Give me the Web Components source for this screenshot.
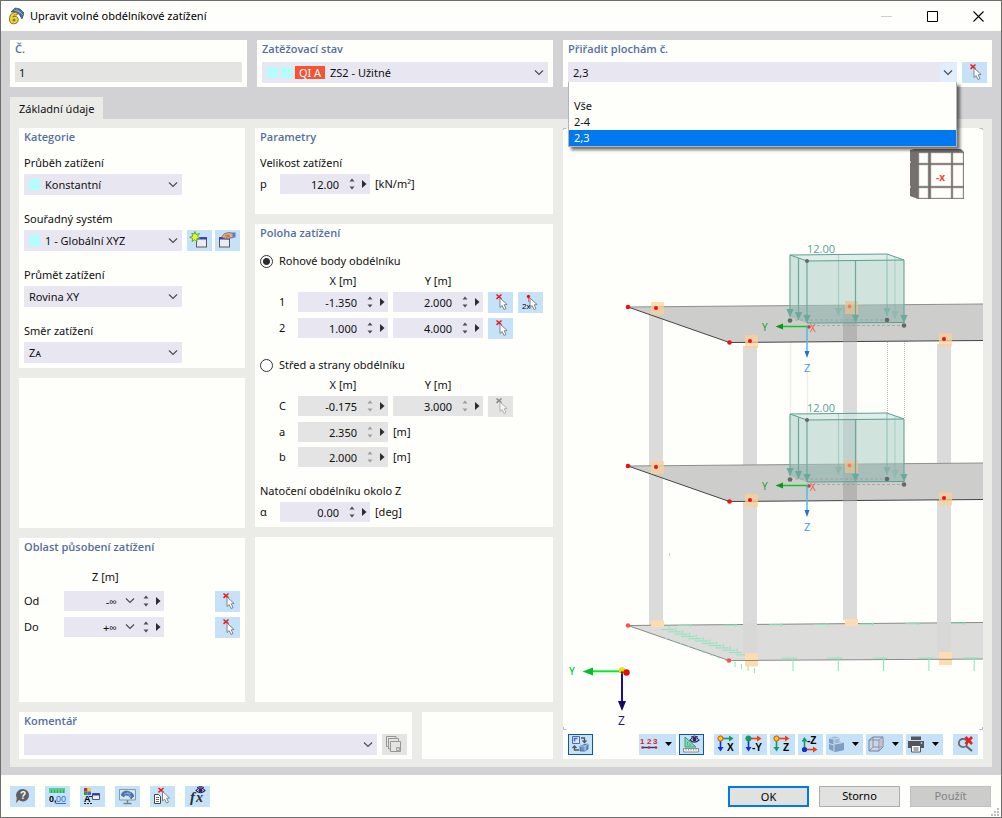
<!DOCTYPE html>
<html lang="cs">
<head>
<meta charset="utf-8">
<title>Upravit volné obdélníkové zatížení</title>
<style>
  body { margin: 0; font: 11px/18px "Noto Sans", "Open Sans", sans-serif; color: #101010; background: #fefefb; }
</style>
</head>
<body>
<load-dialog></load-dialog>

<script>
const BASE = `
  *, *::before, *::after { box-sizing: border-box; }
  button, input, select { font: inherit; color: inherit; margin: 0; }
  button { padding: 0; border: 0; background: none; }
  svg { display: block; }
`;

function define(name, render) {
  customElements.define(name, class extends HTMLElement {
    connectedCallback() {
      if (this.shadowRoot) return;
      const t = document.createElement('template');
      t.innerHTML = render(this);
      this.attachShadow({ mode: 'open' }).append(t.content.cloneNode(true));
    }
  });
}

const cursor = (x, y, c = '#77777f', f = '#fff') =>
  `<path d="M${x} ${y}v9.5l2.2-1.9 1.8 3.9 2-.9-1.8-3.8 2.9-.3z" fill="${f}" stroke="${c}" stroke-width=".9"/>`;
const cross = (x, y, c = '#f01818') =>
  `<path d="M${x} ${y}l5 4.4M${x + 5} ${y}l-5 4.4" stroke="${c}" stroke-width="1.5" fill="none"/>`;
const eye = (x, y) =>
  `<path d="M${x - 4.5} ${y}q4.5-5.500 9 0q-4.500 4.500-9 0z" fill="#fff" stroke="#2b2163" stroke-width="1.100"/><circle cx="${x}" cy="${y - .3}" r="2" fill="#2b2163"/><path d="M${x - 3.5} ${y - 3}q3.500-2 7 0" stroke="#2b2163" fill="none"/>`;
const axes = (h, v, dot, label, up) => up
  ? `<path d="M6.500 14V5" stroke="${v}" stroke-width="1.600"/><path d="M3.500 7.500l3-4.500 3 4.500z" fill="${v}"/><path d="M7 15.500h9" stroke="${h}" stroke-width="1.600"/><path d="M15 12.500l4.500 3-4.500 3z" fill="${h}"/><circle cx="6.500" cy="15.500" r="2.600" fill="${dot}"/><text x="9" y="10" font-size="10" font-weight="700">${label}</text>`
  : `<path d="M6.500 5v9" stroke="${v}" stroke-width="1.600"/><path d="M3.500 13l3 4.500 3-4.500z" fill="${v}"/><path d="M7 4.500h9" stroke="${h}" stroke-width="1.600"/><path d="M15 1.500l4.500 3-4.500 3z" fill="${h}"/><circle cx="6.500" cy="4.500" r="2.600" fill="${dot}" stroke="${dot === '#ffd000' ? '#e04010' : dot}"/><text x="${label.length > 1 ? 10 : 13}" y="17" font-size="10" font-weight="700">${label}</text>`;
const newWindow = x =>
  `<rect x="${x + .5}" y="7.500" width="10" height="9.500" fill="#ecebf0" stroke="#5e5a50"/><path d="M${x} 8.500h11" stroke="#3b36d8" stroke-width="2"/>`;

const ICONS = {
  pick: cross(8.5, 2.5) + cursor(12, 6),
  pickOff: cross(8.5, 2.5, '#888') + cursor(12, 6, '#aaa', '#f6f6f6'),
  pickTwo: `<path d="M10.500 5v5" stroke="#e07070"/>` + cursor(12, 6) + `<circle cx="10.500" cy="4.500" r="1.700" fill="#f01010"/><text x="4" y="17" font-size="8">2x</text>`,
  create: newWindow(9) + `<path d="M8 1.500l1 3 3.500-1-2 2.800 2.500 2-3.200.4.200 3.300-2.300-2.400-2.700 2 .8-3.100-3-1.300 3-1-1-3 2.300 1z" fill="#e8ff20" stroke="#3d9a35" stroke-width=".8"/>`,
  edit: newWindow(4) + `<path d="M7 6.500l2.500-3 5-1 4.500 1-.5 4-4.500.7-1 1.800-1-1.700-2 1.200-.5-1.700-1.800.4z" fill="#dcab84" stroke="#80604a" stroke-width=".8"/><path d="M10 6l4-1M11 7.500l4-1.500" stroke="#80604a" stroke-width=".7"/><path d="M17.500 2.500h3v5l-3-.5z" fill="#4f83d0"/>`,
  copy: `<g fill="#e4e4e2" stroke="#969693"><path d="M4.500 2.500h9.500v10H4.500z"/><path d="M6.500 4.500h10v10.500h-10z"/><path d="M8.500 7.500h10v10h-10z"/><path d="M14.500 13.500h3v3h-3zM15 15.500l2.500-2.500" stroke-width=".8"/></g>`,
  help: `<path d="M13 3a6.200 6.200 0 1 1-4 11l-3 3 .8-5A6.200 6.200 0 0 1 13 3z" fill="#62605e"/><text x="10" y="13" font-size="10" font-weight="700" fill="#fff">?</text>`,
  units: `<path d="M4 2h16v5H4z" fill="#55cf8b"/><path d="M6.500 4v3M9.500 4v3M12.500 4v3M15.500 4v3M18.500 4v3" stroke="#2c9a60" stroke-width=".8"/><text x="4" y="16" font-size="9" font-weight="700">0,</text><text x="11" y="16" font-size="9" fill="#3d66d8">00</text><path d="M11 17.500h10" stroke="#3d66d8"/>`,
  display: `<path d="M4 2h3.500v3.500H4z" fill="#e02020"/><path d="M7.500 2H11v3.500H7.500z" fill="#e8d820"/><path d="M4 5.500h3.500V9H4z" fill="#20a040"/><path d="M7.500 5.500H11V9H7.500z" fill="#6050f0"/><text x="4" y="16" font-size="9" font-weight="700">A</text><path d="M4 17.500h8" stroke="#222" stroke-dasharray="2 1"/><path d="M9 10.500h4" stroke="#222"/><path d="M12.500 7.500h7v6h-7z" fill="#f0eff8" stroke="#555"/><path d="M12.500 8.500h7" stroke="#3b36b8" stroke-width="2"/>`,
  monitor: `<path d="M4.500 3.500h16v10.500h-16z" fill="#d2e6f5" stroke="#8c989e"/><path d="M6 9q3-7 11-2l2 3-3 3q-1-4-5-4-2 0-2 2z" fill="#4777ae" stroke="#305a8c" stroke-width=".6"/><path d="M9 8l7-1M12 6l4 5" stroke="#9fc2e6" stroke-width=".7"/><path d="M12.500 14v3M8.500 17.500h8" stroke="#7c8488" stroke-width="1.500"/>`,
  listPick: `<path d="M4.500 8.500h4l2 2v7h-6z" fill="#fff" stroke="#444"/><path d="M6 11.500h3M6 13.500h3M6 15.500h3" stroke="#444" stroke-width=".8"/>` + cross(8.5, 2) + cursor(12.5, 5.5),
  formula: `<g font-family="'Liberation Serif', serif" font-style="italic" font-weight="700" fill="#26323c"><text x="5" y="16" font-size="15">f</text><text x="11" y="16" font-size="14">x</text></g>` + eye(15.5, 4.5),
  views: `<path d="M4.500 2.500h7v7h-7z" fill="#dce8fa" stroke="#4a68c0"/><path d="M6.500 7.500v-3h3" stroke="#4a68c0" stroke-width="1.500" fill="none"/><path d="M13 4h3.500v4M14.500 6.500l2 2 2-2" stroke="#555" fill="none" stroke-width="1.300"/><path d="M11 16H6.500v-3.500M4.500 14l2-2 2 2" stroke="#555" fill="none" stroke-width="1.300"/><path d="M12 12l5-1.500 3-.5v5l-3 2h-5z" fill="#6a96c4" stroke="#3c638e" stroke-width=".8"/><path d="M12 12h5v5M17 12l3-2" stroke="#c9def2" stroke-width=".8" fill="none"/>`,
  numbers: `<g font-size="8" font-weight="700" fill="#e02020"><text x="1" y="10">1</text><text x="8" y="10">2</text><text x="14" y="10">3</text></g><path d="M3.500 13.500h14" stroke="#2b2a80" stroke-width="1.300"/><g fill="#e02020"><circle cx="3.500" cy="13.500" r="1.300"/><circle cx="10" cy="13.500" r="1.300"/><circle cx="17" cy="13.500" r="1.300"/></g>`,
  measure: `<path d="M6 3v10h11z" fill="#7fe0aa" stroke="#3e9a70"/><path d="M8.500 8v3h3.500z" fill="#c5e2f8" stroke="#3e9a70" stroke-width=".7"/><path d="M4.500 14.500h15v3.500h-15z" fill="#f4f4f0" stroke="#777" stroke-width=".8"/><path d="M7 15v1.500M9.500 15v1.500M12 15v1.500M14.500 15v1.500M17 15v1.500" stroke="#777" stroke-width=".7"/>` + eye(15.5, 6),
  axisX: axes('#109a68', '#1030d0', '#ffd000', 'X'),
  axisY: axes('#f04010', '#1030d0', '#109a68', '-Y'),
  axisZ: axes('#f04010', '#109a68', '#ffd000', 'Z'),
  axisUp: axes('#f04010', '#109a68', '#1030d0', '-Z', true),
  solid: `<path d="M3 4l6-1.500 5 1v4l4 1v7.500l-9 2-6-3z" fill="#9dbbd6"/><path d="M3 4l5 1.200v5l10-1.700V16l-9 2-6-3z" fill="#7e9fc2"/><path d="M3 4l5 1.200 6-1.700M8 5.200v5l9.500-1.700M3 9.500l5 1.500v6.500M14 4v4" fill="none" stroke="#dceaf6" stroke-width=".8"/>`,
  cube: `<path d="M3 6l4-3h10v10l-4 4H3z" fill="#c8d6e6" stroke="#77809a"/><path d="M3 6h10v11M13 6l4-3M7 3v10h10M7 13l-4 4" fill="none" stroke="#77809a" stroke-width=".8"/><path d="M13 6l4-3v10l-4 4z" fill="#c7a9b8" opacity=".5"/>`,
  print: `<path d="M5 2.500h10V6H5z" fill="#55565a"/><path d="M2 7h16v7H2z" fill="#55565a"/><path d="M5.500 11.500h9v6.500h-9z" fill="#fff" stroke="#55565a"/><path d="M7.500 14h5M7.500 16h5" stroke="#55565a"/><circle cx="15.500" cy="9" r=".8" fill="#fff"/>`,
  noFind: `<circle cx="10" cy="9" r="4.200" fill="none" stroke="#666" stroke-width="1.700"/><path d="M13 12l6 5" stroke="#666" stroke-width="2.200"/><path d="M12.500 3l6.500 7M19 3l-6.500 7" stroke="#ee1c1c" stroke-width="2.600"/>`
};

define('tool-button', el => {
  const split = el.hasAttribute('split'), icon = el.getAttribute('icon');
  return `<style>${BASE}
    :host { display: block; flex: none; width: ${split ? 37 : 25}px; height: 21px; }
    button { display: flex; width: 100%; height: 100%; background: #c5e2f9; }
    button[aria-pressed=true] { box-shadow: inset 0 0 0 1px #0a59a8; }
    button:disabled { background: #e4e4e2; }
    svg { font-family: "Liberation Sans", sans-serif; }
  </style>
  <button type="button" aria-label="${el.getAttribute('label')}" ${el.hasAttribute('disabled') ? 'disabled' : ''} ${el.hasAttribute('pressed') ? 'aria-pressed="true"' : ''}>
    <svg width="${split ? 37 : 25}" height="21" viewBox="0 0 ${split ? 37 : 25} 21" aria-hidden="true">${ICONS[icon]}${split ? '<path d="M26 8h7l-3.500 4z" fill="#000"/>' : ''}</svg>
  </button>`;
});

define('group-panel', el => `<style>${BASE}
  :host { display: block; min-width: 0; padding: 0 5px 4px; background: #fefefb; }
  h2 { margin: 0 0 4px; font: 600 11px/18px "Open Sans", "Noto Sans", sans-serif; color: #54709c; }
  </style>${el.hasAttribute('heading') ? `<h2>${el.getAttribute('heading')}</h2>` : ''}<slot></slot>`);

define('color-swatch', () => `<style>:host { display: block; flex: none; width: 11px; height: 11px; background: #b4fdfd; }</style>`);

define('drop-box', () => `<style>${BASE}
  :host { display: flex; align-items: center; position: relative; min-width: 0; height: 21px; padding-left: 5px; background: #e8e7f1; }
  ::slotted(select), ::slotted(input) { flex: 1; min-width: 0; width: 100%; height: 21px; margin: 0; padding: 0 18px 0 0; border: 0; background: none; appearance: none; font: inherit; line-height: 21px; color: inherit; outline: 0; }
  svg { position: absolute; right: 4px; top: 8px; pointer-events: none; }
  </style><slot name="lead"></slot><slot></slot>
  <svg width="10" height="6" viewBox="0 0 10 6" aria-hidden="true"><path d="M1 .5l4 4 4-4" fill="none" stroke="#4c4c52" stroke-width="1.200"/></svg>
  <slot name="list"></slot>`);

define('spin-box', el => {
  const c = el.hasAttribute('off') ? '#9b9b9b' : '#4c4c52', list = el.hasAttribute('list');
  return `<style>${BASE}
  :host { display: flex; height: 20px; background: ${el.hasAttribute('off') ? '#e4e4e4' : '#e8e7f1'}; }
  ::slotted(input) { flex: 1; min-width: 0; width: 0; height: 20px; padding: 2px ${list ? 3 : 7}px 0 0; border: 0; background: none; font: inherit; color: #101010; text-align: right; outline: 0; }
  button { display: grid; place-items: center; width: 12px; height: 100%; }
  .list { width: 20px; }
  .steps { display: grid; grid-template-rows: 1fr 1fr; padding: 2px 0; }
  .steps button { height: 8px; }
  </style><slot></slot>
  ${list ? `<button type="button" class="list" aria-label="Seznam" tabindex="-1"><svg width="10" height="6" viewBox="0 0 10 6"><path d="M1 .5l4 4 4-4" fill="none" stroke="#4c4c52" stroke-width="1.200"/></svg></button>` : ''}
  <div class="steps">
    <button type="button" tabindex="-1" aria-label="Zvýšit"><svg width="6" height="4" viewBox="0 0 6 4"><path d="M.5 3.500L3 .5l2.500 3z" fill="${c}"/></svg></button>
    <button type="button" tabindex="-1" aria-label="Snížit"><svg width="6" height="4" viewBox="0 0 6 4"><path d="M.5.5L3 3.500 5.500.5z" fill="${c}"/></svg></button>
  </div>
  <button type="button" tabindex="-1" aria-label="Další"><svg width="6" height="8" viewBox="0 0 6 8"><path d="M1 0v8l4.500-4z" fill="#2c2c2c"/></svg></button>`;
});

define('title-bar', () => `<style>${BASE}
  :host { display: flex; flex: none; align-items: center; height: 30px; padding-left: 7px; background: #fefefb; }
  h1 { flex: 1; margin: 0 0 0 6px; font: inherit; color: #000; }
  button { display: grid; place-items: center; width: 46px; height: 30px; }
  </style>
  <svg width="16" height="18" viewBox="0 0 16 18" aria-hidden="true">
    <path d="M3 5l4-4 5 1 4 4-2 6-3-5-4-2z" fill="#4b6d9c" stroke="#2d4668" stroke-width=".7"/><path d="M6 3l6 2 3 3M8 1.500l5 5" stroke="#a9c2e2" stroke-width=".7" fill="none"/>
    <path d="M9.500 5.500C4 4.500 1.500 8 1.500 12c0 3.500 1.500 4.800 4 4.800 3 0 4.700-1.500 4.700-4 0-2.300-1.400-3.500-3.200-3.500-1 0-1.600.3-2.200.8C5.200 8.500 6.500 7.500 9 8z" fill="#f2d534" stroke="#75621b" stroke-width=".9"/><circle cx="6" cy="13" r="1.500" fill="#8a7a34"/>
  </svg>
  <h1>Upravit volné obdélníkové zatížení</h1>
  <button type="button" aria-label="Minimalizovat"><svg width="11" height="11" viewBox="0 0 11 11"><path d="M0 5.500h11" stroke="#cfcfcf"/></svg></button>
  <button type="button" aria-label="Maximalizovat"><svg width="11" height="11" viewBox="0 0 11 11"><path d="M.5.5h10v10H.5z" fill="none" stroke="#000"/></svg></button>
  <button type="button" aria-label="Zavřít"><svg width="11" height="11" viewBox="0 0 11 11"><path d="M.5.5l10 10M10.500.5l-10 10" stroke="#000" stroke-width="1.100"/></svg></button>`);

/* One storey: the slab with its column heads, the load box above it and the local axes. */
function storey(dy) {
  const node = (x, y, c = '#f01010', r = 2.3) => `<circle cx="${x}" cy="${y}" r="${r}" fill="${c}"/>`;
  const arrow = (x, y1, y2, o = 1) => `<g opacity="${o}"><path d="M${x} ${y1}V${y2}" stroke="#68ab9d" stroke-width="1.200"/><path d="M${x - 3.6} ${y2 - 8}h7.200l-3.600 8z" fill="#68ab9d"/></g>`;
  return `<g transform="translate(0 ${dy})">
    <path d="M628 307L983 304V340.500L729.500 342.500z" fill="#cdcdcb"/>
    <path d="M628 307L983 304" stroke="#8f8f8f" fill="none"/>
    <path d="M628 307L729.500 342.500L983 340.500" stroke="#444" fill="none"/>
    <path d="M843 306h14v35.500h-14z" fill="#b4b4b2"/>
    <g fill="#ffd096" opacity=".72"><path d="M651 302h13v13h-13zM745 335h13v13h-13zM939 333.500h13v13h-13z"/></g>
    ${node(628, 307)}${node(656, 308, '#f01010', 2)}${node(729.5, 342.5)}${node(750, 341, '#f01010', 2)}${node(944, 339, '#f01010', 2)}
    <path d="M790 255L887 254L904 260V323H807L790 317z" fill="#a9cbc2" opacity=".54"/>
    <path d="M790 306.500L904 305V323H807L790 317z" fill="#7f9f98" opacity=".28"/>
    <path d="M790 255L887 254L904 260L807 261z" fill="#fff" opacity=".35"/>
    <path d="M845 301h13v13h-13z" fill="#e8c394" opacity=".75"/>${node(849.5, 306.5, '#f08060', 2)}
    <path d="M790 255L887 254L904 260L807 261zM807 323L904 322.500" fill="none" stroke="#58a294"/>
    ${arrow(838.5, 254, 316, .4)}${arrow(887, 254, 316, .55)}${arrow(895, 257, 319, .3)}${arrow(790, 255, 317)}${arrow(798.5, 258, 320)}${arrow(807, 261, 323)}${arrow(855.5, 261, 323)}${arrow(904, 260, 323)}
    <path d="M807 325.500H904M790 320L887 320" stroke="#999" stroke-dasharray="3 2" fill="none" stroke-width=".7"/>
    ${node(807, 261, '#666', 2)}${node(790, 320.5, '#666')}${node(887, 320, '#666')}${node(904, 325.5, '#666')}
    <text x="807" y="253" font-size="11" fill="#58a294">12.00</text>
    <path d="M807 326.500H782" stroke="#08c81c" stroke-width="1.500"/><path d="M783 323.500v6l-7.500-3z" fill="#089818"/>
    <path d="M807 327v25" stroke="#49bdf2" stroke-width="1.500"/><path d="M804.500 351h5l-2.500 7z" fill="#2570c8"/>
    <circle cx="809" cy="327" r="1.800" fill="#c04838"/><text x="810" y="332" font-size="10" fill="#f45a48">X</text>
    <text x="762" y="331" font-size="10" fill="#109a18">Y</text>
    <text x="804" y="372" font-size="11" fill="#3b9bf0">Z</text>
  </g>`;
}
function supports() {
  let top = '', side = '', bottom = '';
  for (let i = 0; i < 7; i++) { const x = 692 + i * 45.5, y = 625.500 - i * .35; top += `M${x - 14} ${y}h14m-1.500-1.500v3`; }
  for (let i = 0; i < 12; i++) { const x = 667 + i * 6.8, y = 626 + i * 2.3; side += `M${x - 6} ${y + 3.5}h13m-5-4v3`; }
  for (let i = 0; i < 5; i++) { const x = 793 + i * 45.3; bottom += `M${x} 657v14m-11-13h15`; }
  for (let i = 0; i < 4; i++) bottom += `M${735 + i * 6.5} ${662 + i * 2}v5`;
  return `<g fill="none" stroke="#86e8b8"><path d="${top}"/><path d="${side}"/><path d="${bottom}"/><path d="M665 638l65 24" stroke-dasharray="2 6"/></g>`;
}

define('model-view', () => {
  let cells = '';
  for (const [y, h] of [[153, 10], [165, 21], [188, 10]])
    for (const [x, w] of [[919, 9], [931, 20], [953, 10]]) cells += `<path d="M${x} ${y}h${w}v${h}h-${w}z"/>`;
  return `<style>${BASE}
  :host { display: flex; flex-direction: column; gap: 4px; min-width: 0; padding-bottom: 4px; background: #fefefb; }
  .scene { flex: 1 1 0px; width: 100%; height: 0; min-height: 400px; }
  .tools { display: flex; flex: none; gap: 3px; padding: 0 5px; }
  .fill { flex: 1; }
  .space { width: 4px; }
  text { font-family: "Open Sans", sans-serif; }
  </style>
  <svg class="scene" viewBox="563 128 420 602" preserveAspectRatio="xMaxYMin meet" role="img" aria-label="Model konstrukce">
    <path d="M563.500 130v-1.500h3M982.500 130v-1.500h-3M563.500 727v2.500h3M982.500 727v2.500h-3" fill="none" stroke="#bbb"/>
    <g fill="#dbdbdb"><path d="M649 313h14v312h-14zM743 346h14v308h-14zM843 306h14v314h-14zM937 344h14v309h-14z"/></g>
    <path d="M628 625.500L983 622.500V659L729 660.500z" fill="#dcdcdb"/>
    <path d="M628 625.500L983 622.500M628 625.500L729 660.500L983 659" fill="none" stroke="#8a8a8a"/>
    ${supports()}
    <path d="M743 624h14v30h-14zM937 622h14v30h-14z" fill="#d8d8d7"/>
    <path d="M651 620.500h13v6.500h-13zM845 619h13v6.500h-13zM745 653.500h13v13h-13zM939 652h13v13h-13z" fill="#ffdbb0"/>
    <path d="M745 660.500h13M939 659.300h13" stroke="#8a8a8a"/>
    <circle cx="628" cy="625.500" r="2.300" fill="#f25848"/><circle cx="729" cy="660.500" r="2.300" fill="#f25848"/>
    <path d="M790.500 320v98M807.500 372v47" stroke="#ededeb" stroke-width="1.500"/>
    <path d="M887.500 322v94M904.500 327v92" stroke="#b5b5b5" stroke-dasharray="1 1"/>
    ${storey(0)}${storey(159)}
    <path d="M669.500 553v3" stroke="#ccc"/>
    <path d="M910 150l4-1h47l3 3v47h-46l-8-3z" fill="#756f6d"/>
    <g fill="#fefefb" stroke="#c2bcba" stroke-width=".6">${cells}</g>
    <path d="M909 162h2M909 187h2" stroke="#fefefb"/>
    <text x="936" y="181" font-size="10" font-weight="700" fill="#f24a34">-x</text>
    <path d="M622 671.300H592" stroke="#08ea30" stroke-width="2"/><path d="M593 667.500v8l-10.500-4z" fill="#06bc28"/>
    <path d="M622 672v30" stroke="#1c0e9c" stroke-width="2"/><path d="M618 701h8l-4 10z" fill="#160866"/>
    <circle cx="622" cy="670.500" r="3.200" fill="#e8e000"/><circle cx="626.500" cy="672.500" r="3.200" fill="#e80808"/><circle cx="622" cy="672.500" r="1.200" fill="#333"/>
    <text x="569" y="675" font-size="10" font-weight="600" fill="#10cc40">Y</text>
    <text x="618" y="725" font-size="12" fill="#1c0e8c">Z</text>
  </svg>
  <div class="tools" role="toolbar" aria-label="Zobrazení">
    <tool-button icon="views" label="Přepnout pohled" pressed></tool-button>
    <div class="fill"></div>
    <tool-button icon="numbers" label="Číslování" split></tool-button>
    <tool-button icon="measure" label="Zobrazit kóty" pressed></tool-button>
    <div class="space"></div>
    <tool-button icon="axisX" label="Pohled ve směru X"></tool-button>
    <tool-button icon="axisY" label="Pohled proti ose Y"></tool-button>
    <tool-button icon="axisZ" label="Pohled ve směru Z"></tool-button>
    <tool-button icon="axisUp" label="Pohled proti ose Z"></tool-button>
    <tool-button icon="solid" label="Styl zobrazení" split></tool-button>
    <tool-button icon="cube" label="Rámeček" split></tool-button>
    <tool-button icon="print" label="Tisk" split></tool-button>
    <div class="space"></div>
    <tool-button icon="noFind" label="Zrušit výběr"></tool-button>
  </div>`;
});

define('command-bar', () => `<style>${BASE}
  :host { display: flex; flex: none; align-items: center; gap: 10px; position: relative; height: 42px; padding: 0 10px 0 9px; background: #fefefb; }
  .fill { flex: 1; }
  .cmd { width: 81px; height: 21px; border: 1px solid #adadad; background: #e1e1df; color: #000; }
  .main { border: 2px solid #0078f0; line-height: 17px; }
  .cmd:disabled { border-color: #bfbfbf; background: #cccccb; color: #838383; }
  .grip { position: absolute; right: 2px; bottom: 1px; }
  </style>
  <tool-button icon="help" label="Nápověda"></tool-button>
  <tool-button icon="units" label="Jednotky"></tool-button>
  <tool-button icon="display" label="Zobrazení"></tool-button>
  <tool-button icon="monitor" label="Náhled"></tool-button>
  <tool-button icon="listPick" label="Výběr"></tool-button>
  <tool-button icon="formula" label="Vzorce"></tool-button>
  <div class="fill"></div>
  <button type="button" class="cmd main">OK</button>
  <button type="button" class="cmd">Storno</button>
  <button type="button" class="cmd" disabled>Použít</button>
  <svg class="grip" width="8" height="8" viewBox="0 0 8 8" aria-hidden="true"><path d="M6 0h2v2H6zM3 3h2v2H3zM6 3h2v2H6zM0 6h2v2H0zM3 6h2v2H3zM6 6h2v2H6z" fill="#bdbdbd"/></svg>`);

const num = (id, value, off) => `<spin-box ${off ? 'off' : ''}><input id="${id}" value="${value}" inputmode="decimal" ${off ? 'disabled' : ''}></spin-box>`;

define('load-dialog', () => `<style>${BASE}
  :host { box-sizing: border-box; display: flex; flex-direction: column; min-height: 100vh; border: 1px solid #6e6e6e; background: #d2d2d4; }
  main { display: flex; flex: 1; flex-direction: column; padding: 9px 9px 8px 9px; }
  .head { display: grid; grid-template-columns: minmax(0, 237fr) minmax(0, 296fr) minmax(0, 429fr); gap: 10px; }
  .line { display: flex; gap: 5px; }
  .line > drop-box { flex: 1; }
  .number { display: block; width: 100%; height: 20px; padding: 0 4px; border: 0; background: #e4e4e2; color: #101010; }
  .tag { flex: none; width: 30px; margin: 0 5px 0 3px; background: #f35436; color: #fff; text-align: center; line-height: 13px; }
  color-swatch + color-swatch { margin-left: 3px; }
  .tab { align-self: flex-start; margin-top: 10px; padding: 3px 9px 1px; height: 22px; background: #ebece8; }
  .page { display: grid; flex: 1; grid-template-columns: minmax(0, 534fr) minmax(0, 420fr); gap: 10px; padding: 9px 9px 8px; background: #ebece8; }
  .left { display: grid; grid-template-rows: 1fr auto; gap: 10px; min-width: 0; }
  .cols { display: grid; grid-template-columns: minmax(0, 226fr) minmax(0, 298fr); gap: 10px; }
  .c1 { display: grid; grid-template-rows: auto 150fr 164fr; gap: 10px; }
  .c2 { display: grid; grid-template-rows: auto auto 1fr; gap: 10px; }
  .note { display: grid; grid-template-columns: minmax(0, 393fr) minmax(0, 131fr); gap: 10px; }
  label { display: block; }
  .fields { display: grid; gap: 15px; padding: 4px 0 1px; }
  .fields .line { gap: 3px; margin-top: 2px; }
  .fields drop-box { max-width: calc(100% - 58px); }
  .fields .line tool-button:nth-child(2) { margin-left: 2px; }
  .fields color-swatch { margin-right: 5px; }
  .single { display: grid; grid-template-columns: 15px 90px 1fr; gap: 5px; margin-top: 2px; line-height: 20px; }
  .mag { padding: 4px 0 16px; }
  .radio { display: flex; align-items: center; gap: 6px; height: 18px; }
  .radio input { appearance: none; width: 13px; height: 13px; border: 1px solid #333; border-radius: 50%; background: #fff; }
  .radio input:checked { background: radial-gradient(#2c2c2c 0 3px, #fff 4px); }
  .place { padding: 6px 0 1px; }
  .grid { display: grid; grid-template-columns: 14px 90px 90px 25px 25px; gap: 5px; margin: 2px 0 17px 19px; line-height: 20px; }
  .grid b, .range b { font-weight: 400; line-height: 18px; text-align: center; }
  .grid b { margin-bottom: -3px; }
  .grid b:first-child { grid-column: 2; }
  .grid label { grid-column: 1; }
  .grid.tail { margin-bottom: 15px; }
  .range { display: grid; grid-template-columns: 35px 100px 1fr 25px; gap: 5px; padding-top: 8px; line-height: 20px; }
  .range b { grid-column: 2 / 5; text-align: left; padding-left: 28px; }
  .range tool-button { grid-column: 4; }
  .combo { z-index: 1; line-height: 20px; background: linear-gradient(#e0eefb, #e0eefb) right / 17px 19px no-repeat #e8e7f1; }
  .list { position: absolute; left: 0; top: 20px; width: 100%; height: 65px; margin: 0; padding: 0; border: 1px solid #b4b4b4; border-top: 0; border-radius: 0; background: #fefefb; box-shadow: 3px 3px 3px #0000008c; overflow: hidden; outline: 0; color: #101010; }
  .list option { height: 16px; min-height: 16px; padding: 0 5px; line-height: 16px; }
  .list option:checked { background: linear-gradient(#0078f0, #0078f0); -webkit-text-fill-color: #fff; }
  </style>
  <title-bar></title-bar>
  <main>
    <div class="head">
      <group-panel heading="Č."><input class="number" aria-label="Č." value="1" readonly></group-panel>
      <group-panel heading="Zatěžovací stav">
        <drop-box><color-swatch slot="lead"></color-swatch><color-swatch slot="lead"></color-swatch><span slot="lead" class="tag">QI A</span>
          <select aria-label="Zatěžovací stav"><option>ZS2 - Užitné</option></select></drop-box>
      </group-panel>
      <group-panel heading="Přiřadit plochám č.">
        <div class="line">
          <drop-box class="combo"><input aria-label="Přiřadit plochám č." value="2,3">
            <select slot="list" class="list" size="4" aria-label="Plochy"><option></option><option>Vše</option><option>2-4</option><option selected>2,3</option></select></drop-box>
          <tool-button icon="pick" label="Vybrat plochy"></tool-button>
        </div>
      </group-panel>
    </div>
    <div class="tab">Základní údaje</div>
    <div class="page">
      <div class="left">
        <div class="cols">
          <div class="c1">
            <group-panel heading="Kategorie">
              <div class="fields">
                <div><label for="dist">Průběh zatížení</label><div class="line"><drop-box><color-swatch slot="lead"></color-swatch><select id="dist"><option>Konstantní</option></select></drop-box></div></div>
                <div><label for="cs">Souřadný systém</label><div class="line"><drop-box><color-swatch slot="lead"></color-swatch><select id="cs"><option>1 - Globální XYZ</option></select></drop-box><tool-button icon="create" label="Nový"></tool-button><tool-button icon="edit" label="Upravit"></tool-button></div></div>
                <div><label for="proj">Průmět zatížení</label><div class="line"><drop-box><select id="proj"><option>Rovina XY</option></select></drop-box></div></div>
                <div><label for="dir">Směr zatížení</label><div class="line"><drop-box><select id="dir"><option>Zᴀ</option></select></drop-box></div></div>
              </div>
            </group-panel>
            <group-panel></group-panel>
            <group-panel heading="Oblast působení zatížení">
              <div class="range">
                <b>Z [m]</b>
                <label for="from">Od</label><spin-box list><input id="from" value="-∞"></spin-box><tool-button icon="pick" label="Vybrat Od"></tool-button>
                <label for="to">Do</label><spin-box list><input id="to" value="+∞"></spin-box><tool-button icon="pick" label="Vybrat Do"></tool-button>
              </div>
            </group-panel>
          </div>
          <div class="c2">
            <group-panel heading="Parametry">
              <div class="mag"><label for="p">Velikost zatížení</label>
                <div class="single"><label for="p">p</label>${num('p', '12.00')}<span>[kN/m²]</span></div></div>
            </group-panel>
            <group-panel heading="Poloha zatížení">
              <div class="place">
                <label class="radio"><input type="radio" name="mode" checked>Rohové body obdélníku</label>
                <div class="grid">
                  <b>X [m]</b><b>Y [m]</b>
                  <label for="x1">1</label>${num('x1', '-1.350')}${num('y1', '2.000')}<tool-button icon="pick" label="Vybrat bod 1"></tool-button><tool-button icon="pickTwo" label="Vybrat dva body"></tool-button>
                  <label for="x2">2</label>${num('x2', '1.000')}${num('y2', '4.000')}<tool-button icon="pick" label="Vybrat bod 2"></tool-button>
                </div>
                <label class="radio"><input type="radio" name="mode">Střed a strany obdélníku</label>
                <div class="grid tail">
                  <b>X [m]</b><b>Y [m]</b>
                  <label for="cx">C</label>${num('cx', '-0.175', 1)}${num('cy', '3.000', 1)}<tool-button icon="pickOff" label="Vybrat střed" disabled></tool-button>
                  <label for="a">a</label>${num('a', '2.350', 1)}<span>[m]</span>
                  <label for="b">b</label>${num('b', '2.000', 1)}<span>[m]</span>
                </div>
                <label for="alpha">Natočení obdélníku okolo Z</label>
                <div class="single"><label for="alpha">α</label>${num('alpha', '0.00')}<span>[deg]</span></div>
              </div>
            </group-panel>
            <group-panel></group-panel>
          </div>
        </div>
        <div class="note">
          <group-panel heading="Komentář"><div class="line"><drop-box><select aria-label="Komentář"><option></option></select></drop-box><tool-button icon="copy" label="Kopírovat" disabled></tool-button></div></group-panel>
          <group-panel></group-panel>
        </div>
      </div>
      <model-view></model-view>
    </div>
  </main>
  <command-bar></command-bar>`);
</script>
</body>
</html>
